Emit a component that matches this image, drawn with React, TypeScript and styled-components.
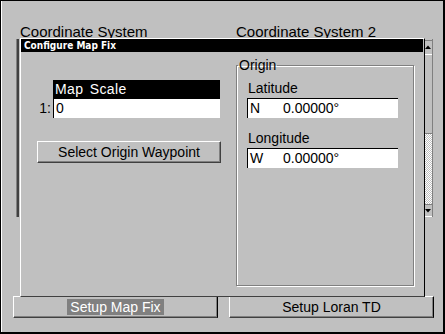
import styled, { createGlobalStyle } from 'styled-components';

const GlobalStyle = createGlobalStyle`
  html, body {
    margin: 0;
    padding: 0;
    background: #c0c0c0;
  }
  body {
    font-family: 'Liberation Sans', Arial, sans-serif;
  }
  * {
    box-sizing: border-box;
  }
`;

const Screen = styled.div`
  position: relative;
  width: 445px;
  height: 334px;
  background: #c0c0c0;
  color: #000;
  font-size: 14px;
  line-height: 16px;
  border-top: 1px solid #000;
  border-left: 1px solid #000;
  border-right: 2px solid #000;
  border-bottom: 2px solid #000;
  box-shadow: inset 1px 0 0 #fff;
  display: grid;
  grid-template-rows: 38px 257px 22px 1fr;
`;

const Row = styled.div<{ $left: number; $gap: number; $top?: number }>`
  display: flex;
  align-items: flex-start;
  padding-left: ${(p) => p.$left}px;
  padding-top: ${(p) => p.$top ?? 0}px;
  gap: ${(p) => p.$gap}px;
`;

const ScreenLabel = styled.div`
  width: 216px;
  font-size: 15px;
  line-height: 17px;
`;

/* list boxes behind the dialog, only their edges show */
const LeftList = styled.div`
  width: 205px;
  height: 178px;
  border-left: 1px solid #808080;
  box-shadow: inset 2px 0 0 #404040;
`;

const RightList = styled.div`
  width: 200px;
  height: 178px;
  display: flex;
  justify-content: flex-end;
`;

const ScrollBar = styled.div`
  width: 9px;
  height: 100%;
  padding-top: 1px;
  border-right: 1px solid #808080;
  display: flex;
  flex-direction: column;
`;

const ScrollArrow = styled.div<{ $h: number }>`
  height: ${(p) => p.$h}px;
  border-top: 1px solid #808080;
  border-bottom: 1px solid #fff;
  display: flex;
  align-items: center;
  justify-content: flex-start;
  padding-left: 1px;
`;

const Thumb = styled.div`
  flex: 1;
  border-left: 1px solid #fff;
  border-bottom: 1px solid #808080;
`;

const Track = styled.div`
  height: 70px;
  background: repeating-conic-gradient(#fff 0 25%, #c0c0c0 0 50%) 0 0 / 2px 2px;
`;

const TabButton = styled.div`
  width: 205px;
  height: 22px;
  border-top: 1px solid #fff;
  border-left: 1px solid #fff;
  border-right: 1px solid #000;
  border-bottom: 1px solid #404040;
  box-shadow: inset -1px -1px 0 #808080;
  display: flex;
  align-items: center;
  justify-content: center;
  padding-bottom: 1px;
`;

const TabText = styled.span<{ $active?: boolean }>`
  padding: 0 3px;
  line-height: 16px;
  background: ${(p) => (p.$active ? '#808080' : 'transparent')};
  color: ${(p) => (p.$active ? '#fff' : '#000')};
`;

const Dialog = styled.section`
  position: absolute;
  left: 19px;
  top: 37px;
  width: 405px;
  height: 259px;
  background: #c0c0c0;
  border-top: 1px solid #fff;
  border-left: 1px solid #fff;
  border-right: 1px solid #000;
  border-bottom: 1px solid #404040;
  display: flex;
  flex-direction: column;
`;

const TitleBar = styled.div`
  height: 13px;
  margin-right: 1px;
  padding-left: 3px;
  background: #000;
  color: #fff;
  font-family: 'Liberation Sans Narrow', 'DejaVu Sans Condensed', 'Liberation Sans', sans-serif;
  font-weight: bold;
  font-size: 10px;
  line-height: 13px;
  white-space: nowrap;
`;

const DialogBody = styled.div`
  flex: 1;
  display: flex;
  align-items: flex-start;
`;

const LeftCol = styled.div`
  width: 215px;
  padding: 28px 0 0 16px;
`;

const ScaleGrid = styled.div`
  display: grid;
  grid-template-columns: 16px 167px;
  grid-template-rows: 18px 20px;
`;

const ScaleHeader = styled.div`
  grid-column: 2;
  background: #000;
  color: #fff;
  padding-left: 2px;
  line-height: 18px;
  letter-spacing: 0.4px;
  word-spacing: 2px;
`;

const ScalePrefix = styled.div`
  text-align: right;
  padding-right: 2px;
  line-height: 20px;
`;

const Field = styled.div<{ $w: number }>`
  width: ${(p) => p.$w}px;
  height: 20px;
  background: #fff;
  border-top: 1px solid #000;
  border-left: 1px solid #000;
  padding-left: 2px;
  line-height: 19px;
  display: flex;
`;

const Hemi = styled.span`
  width: 33px;
`;

const PushButton = styled.div`
  margin-top: 23px;
  width: 184px;
  height: 22px;
  border-top: 1px solid #fff;
  border-left: 1px solid #fff;
  border-right: 1px solid #404040;
  border-bottom: 1px solid #404040;
  box-shadow: inset -1px -1px 0 #808080;
  display: flex;
  align-items: center;
  justify-content: center;
`;

const GroupBox = styled.fieldset`
  margin: 5px 0 0 0;
  width: 178px;
  height: 229px;
  padding: 7px 0 0 10px;
  border: 1px solid #808080;
  box-shadow: 1px 1px 0 #fff, inset 1px 1px 0 #fff;
  min-inline-size: 0;
`;

const GroupLegend = styled.legend`
  margin-left: -9px;
  padding: 0 1px;
  line-height: 16px;
`;

const FieldLabel = styled.div<{ $gap?: number }>`
  margin-top: ${(p) => p.$gap ?? 0}px;
  margin-bottom: 2px;
  padding-left: 1px;
  line-height: 16px;
`;

const Arrow = ({ up }: { up?: boolean }) => (
  <svg width="6" height="5" viewBox="0 0 6 5">
    <path d={up ? 'M0 4 L3 0.5 L6 4 Z' : 'M0 1 L3 4.5 L6 1 Z'} fill="#000" />
  </svg>
);

const coords = [
  { label: 'Latitude', hemi: 'N', value: '0.00000°' },
  { label: 'Longitude', hemi: 'W', value: '0.00000°' },
];

export default function App() {
  return (
    <>
      <GlobalStyle />
      <Screen>
        <Row $left={19} $gap={0} $top={22}>
          <ScreenLabel>Coordinate System</ScreenLabel>
          <ScreenLabel>Coordinate System 2</ScreenLabel>
        </Row>
        <Row $left={15} $gap={12}>
          <LeftList />
          <RightList>
            <ScrollBar>
              <ScrollArrow $h={15}>
                <Arrow up />
              </ScrollArrow>
              <Thumb />
              <Track />
              <ScrollArrow $h={13}>
                <Arrow />
              </ScrollArrow>
            </ScrollBar>
          </RightList>
        </Row>
        <Row $left={12} $gap={11}>
          <TabButton>
            <TabText $active>Setup Map Fix</TabText>
          </TabButton>
          <TabButton>
            <TabText>Setup Loran TD</TabText>
          </TabButton>
        </Row>

        <Dialog>
          <TitleBar>Configure Map Fix</TitleBar>
          <DialogBody>
            <LeftCol>
              <ScaleGrid>
                <ScaleHeader>Map Scale</ScaleHeader>
                <ScalePrefix>1:</ScalePrefix>
                <Field $w={167}>0</Field>
              </ScaleGrid>
              <PushButton>Select Origin Waypoint</PushButton>
            </LeftCol>
            <GroupBox>
              <GroupLegend>Origin</GroupLegend>
              {coords.map((c, i) => (
                <div key={c.label}>
                  <FieldLabel $gap={i === 0 ? 0 : 12}>{c.label}</FieldLabel>
                  <Field $w={151}>
                    <Hemi>{c.hemi}</Hemi>
                    {c.value}
                  </Field>
                </div>
              ))}
            </GroupBox>
          </DialogBody>
        </Dialog>
      </Screen>
    </>
  );
}
